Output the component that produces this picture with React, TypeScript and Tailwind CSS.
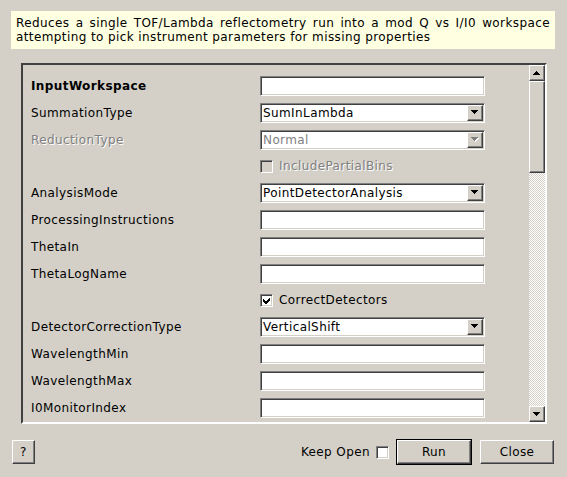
import React from "react";

const sunken =
  "border border-t-[#808080] border-l-[#808080] border-b-white border-r-white shadow-[inset_1px_1px_0_#404040,inset_-1px_-1px_0_#d4d0c8]";
const raised =
  "border border-t-white border-l-white border-b-[#404040] border-r-[#404040] shadow-[inset_-1px_-1px_0_#808080,inset_1px_1px_0_#d4d0c8]";
const disabledText = "text-[#808080] [text-shadow:1px_1px_0_#ffffff]";

function Tri({ up = false, disabled = false }: { up?: boolean; disabled?: boolean }) {
  return (
    <svg width="8" height="5" viewBox="0 0 8 5" shapeRendering="crispEdges" className="block">
      {disabled && (
        <polygon points={up ? "4.5,1 8,5 1,5" : "1,1 8,1 4.5,5"} fill="#ffffff" />
      )}
      <polygon
        points={up ? "3.5,0 7,4 0,4" : "0,0 7,0 3.5,4"}
        fill={disabled ? "#808080" : "#000000"}
      />
    </svg>
  );
}

function Input() {
  return <div className={`h-[20px] w-[225px] bg-white ${sunken}`} />;
}

function Select({ value, disabled = false }: { value: string; disabled?: boolean }) {
  return (
    <div className={`h-[20px] w-[225px] bg-white ${sunken} flex items-center pr-[1px]`}>
      <span className={`flex-1 pl-[2px] leading-[16px] ${disabled ? "text-[#808080]" : ""}`}>{value}</span>
      <div className={`w-[16px] h-[16px] bg-[#d4d0c8] ${raised} flex items-center justify-center`}>
        <Tri disabled={disabled} />
      </div>
    </div>
  );
}

function Check({ checked = false, disabled = false }: { checked?: boolean; disabled?: boolean }) {
  return (
    <div
      className={`w-[13px] h-[13px] ${disabled ? "bg-[#d4d0c8]" : "bg-white"} ${sunken} flex items-center justify-center`}
    >
      {checked && (
        <svg width="7" height="7" viewBox="0 0 7 7" shapeRendering="crispEdges" className="block">
          <path d="M0 2v3l2 2h1l4-4V0L2.5 4.5z" fill="#000" />
        </svg>
      )}
    </div>
  );
}

function Row({
  label,
  bold = false,
  disabled = false,
  children,
}: {
  label: string;
  bold?: boolean;
  disabled?: boolean;
  children: React.ReactNode;
}) {
  return (
    <div className="flex items-center h-[27px]">
      <div className={`w-[237px] pl-[8px] ${bold ? "font-bold" : ""} ${disabled ? disabledText : ""}`}>{label}</div>
      {children}
    </div>
  );
}

function CheckRow({ label, checked = false, disabled = false }: { label: string; checked?: boolean; disabled?: boolean }) {
  return (
    <div className="flex items-center h-[26px]">
      <div className="w-[237px]" />
      <Check checked={checked} disabled={disabled} />
      <span className={`ml-[6px] ${disabled ? disabledText : ""}`}>{label}</span>
    </div>
  );
}

function Button({ children, className = "" }: { children: React.ReactNode; className?: string }) {
  return (
    <div className={`bg-[#d4d0c8] ${raised} flex items-center justify-center ${className}`}>{children}</div>
  );
}

export default function App() {
  return (
    <div className="w-[567px] h-[477px] bg-[#d4d0c8] font-['DejaVu_Sans',sans-serif] text-[12px] tracking-[0.4px] text-black flex flex-col overflow-hidden">
      <div className="ml-[11px] mt-[11px] w-[544px] h-[38px] bg-[#ffffe1] px-[5px] py-[5px] leading-[14px]">
        <div className="text-justify [text-align-last:justify]">
          Reduces a single TOF/Lambda reflectometry run into a mod Q vs I/I0 workspace
        </div>
        <div>attempting to pick instrument parameters for missing properties</div>
      </div>

      <div
        className={`ml-[21px] mt-[14px] w-[526px] h-[361px] border-2 border-t-[#404040] border-l-[#404040] border-b-white border-r-white flex`}
      >
        <div className="flex-1 pt-[7px] flex flex-col">
          <Row label="InputWorkspace" bold>
            <Input />
          </Row>
          <Row label="SummationType">
            <Select value="SumInLambda" />
          </Row>
          <Row label="ReductionType" disabled>
            <Select value="Normal" disabled />
          </Row>
          <CheckRow label="IncludePartialBins" disabled />
          <Row label="AnalysisMode">
            <Select value="PointDetectorAnalysis" />
          </Row>
          <Row label="ProcessingInstructions">
            <Input />
          </Row>
          <Row label="ThetaIn">
            <Input />
          </Row>
          <Row label="ThetaLogName">
            <Input />
          </Row>
          <CheckRow label="CorrectDetectors" checked />
          <Row label="DetectorCorrectionType">
            <Select value="VerticalShift" />
          </Row>
          <Row label="WavelengthMin">
            <Input />
          </Row>
          <Row label="WavelengthMax">
            <Input />
          </Row>
          <Row label="I0MonitorIndex">
            <Input />
          </Row>
        </div>
        <div className="w-[16px] flex flex-col">
          <div className={`h-[16px] bg-[#d4d0c8] ${raised} flex items-center justify-center`}>
            <Tri up />
          </div>
          <div className={`h-[92px] bg-[#d4d0c8] ${raised}`} />
          <div className="flex-1 bg-[repeating-conic-gradient(#ffffff_0_25%,#d4d0c8_0_50%)] bg-[length:2px_2px]" />
          <div className={`h-[16px] bg-[#d4d0c8] ${raised} flex items-center justify-center`}>
            <Tri />
          </div>
        </div>
      </div>

      <div className="mt-[15px] h-[26px] flex items-center pl-[12px] pr-[13px]">
        <Button className="w-[23px] h-[24px]">?</Button>
        <div className="flex-1" />
        <span>Keep Open</span>
        <div className="ml-[6px]">
          <Check />
        </div>
        <div className="ml-[7px] border border-black">
          <Button className="w-[74px] h-[24px]">Run</Button>
        </div>
        <Button className="ml-[8px] w-[74px] h-[24px]">Close</Button>
      </div>
    </div>
  );
}
